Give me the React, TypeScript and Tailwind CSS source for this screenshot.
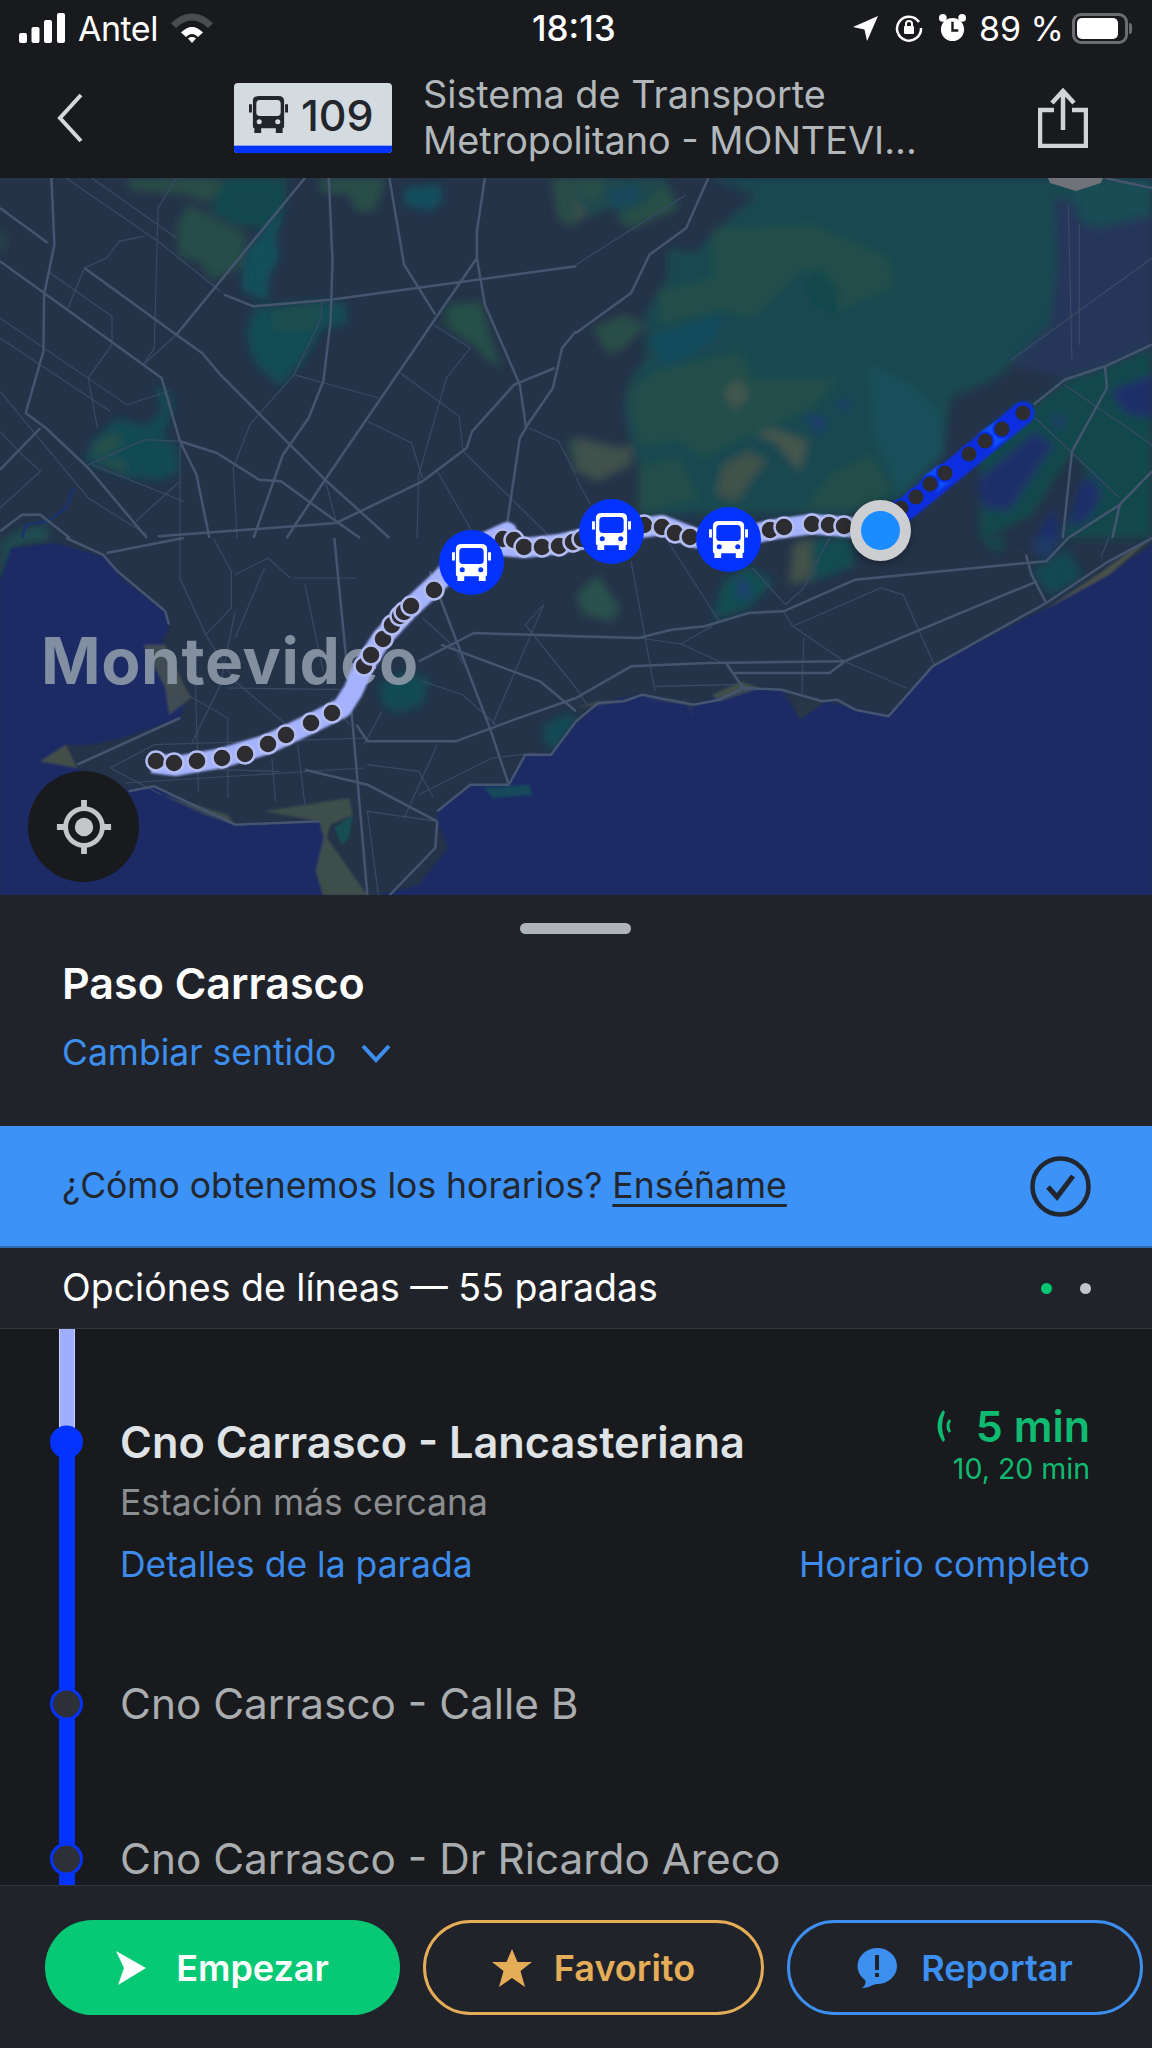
// The map was traced in four crops, each 576x360 px shown at 1568x1080.
const SX = 2.722
const SY = 3

type Quad = 0 | 1 | 2 | 3
const OFFSET: [number, number][] = [[0, 0], [576, 0], [0, 360], [576, 360]]

function conv(quad: Quad, s: string): string {
  const [ox, oy] = OFFSET[quad]
  return s
    .split(' ')
    .map((p) => {
      const [x, y] = p.split(',').map(Number)
      return `${(ox + x / SX).toFixed(1)},${(oy + y / SY).toFixed(1)}`
    })
    .join(' ')
}

const AREAS: [Quad, string, string][] = [
  // top left
  [0, '#2c5447', '350,0 600,0 600,40 560,75 510,50 350,35'],
  [0, '#11504f', '610,0 780,0 780,60 760,150 650,145 570,100'],
  [0, '#275449', '510,80 570,110 670,170 660,260 580,310 540,250 490,240 480,150'],
  [0, '#0f5860', '770,100 750,180 760,240 730,300 730,370 660,340 660,270 680,200'],
  [0, '#0f5258', '690,390 870,370 940,375 945,440 880,450 820,560 760,625 690,550 670,470'],
  [0, '#1d5650', '740,400 870,380 860,450 750,460'],
  [0, '#2a5649', '870,0 1050,0 1020,100 970,100 950,50 870,40'],
  [0, '#0e5763', '1100,30 1200,20 1205,70 1170,100 1100,80'],
  [0, '#1f3f3f', '1200,400 1220,380 1220,440 1190,440'],
  [0, '#285949', '1220,380 1310,370 1340,500 1370,570 1320,540 1300,510 1220,450'],
  [0, '#2c5447', '1500,0 1568,0 1568,150 1520,130'],
  [0, '#0f5158', '420,620 470,650 465,720 440,780 480,800 490,880 430,910 390,900 350,900 230,850 250,790 320,720 400,745 440,700'],
  [0, '#2a5a48', '250,810 320,760 330,800 260,840'],
  [0, '#2c5a48', '260,850 340,850 340,885'],
  [0, '#2b5a48', '0,150 12,170 10,220 0,220'],
  [0, '#1c5a55', '50,1060 130,1040 130,1080 20,1080'],
  [0, '#2a5a4a', '1545,790 1568,780 1568,890'],
  // top right, the big green mass
  [1, '#1a5050', '0,0 240,0 280,90 150,150 100,90 0,130'],
  [1, '#2b5649', '0,0 80,0 60,70 20,60'],
  [1, '#125065', '80,40 170,20 170,70 110,90'],
  [1, '#2c5847', '200,70 240,20 280,90 150,150 110,120'],
  [1, '#445a4c', '0,60 30,110 0,130'],
  [1, '#134f52', '360,0 1340,0 1370,130 1300,60 1310,250 1290,440 1180,570 1130,610 1020,660 1000,830 880,970 760,1010 170,1010 170,870 150,800 130,680 150,600 190,540 190,400 210,370 250,300 250,210 320,225 370,170 490,50'],
  [1, '#28395e', '1300,60 1568,110 1568,500 1430,570 1330,600 1180,560 1290,440 1310,250'],
  [1, '#125359', '1340,0 1568,0 1568,110 1420,150 1370,130'],
  [1, '#24544c', '370,150 650,140 850,240 870,320 720,400 620,270 480,420 400,400 230,440 220,340 370,300'],
  [1, '#24544c', '140,640 230,570 450,520 480,600 720,600 640,690 420,800 350,840 280,790 170,800'],
  [1, '#24544c', '170,860 280,840 340,960 170,1010'],
  [1, '#24544c', '700,880 800,830 860,930 800,1000 620,990'],
  [1, '#0f5163', '200,480 400,400 380,480 300,540 240,570'],
  [1, '#0f4f4e', '620,330 660,260 710,330 720,420 650,380'],
  [1, '#165860', '800,560 910,620 990,700 1000,830 880,950 810,760'],
  [1, '#48604f', '400,640 440,600 475,650 430,700'],
  [1, '#50604f', '490,770 530,750 630,790 610,880 540,790'],
  [1, '#465c4c', '400,860 470,820 520,850 480,900 440,970 380,950'],
  [1, '#1e3c7d', '620,715 680,720 670,770'],
  [1, '#1a3f7a', '715,670 745,665 740,695 720,695'],
  [1, '#2c5749', '45,450 130,410 190,440 130,510 90,530'],
  [1, '#4a5a4e', '0,780 50,790 120,810 150,800 150,860 60,910 0,880'],
  [1, '#114f4d', '1250,680 1330,610 1440,570 1568,510 1568,1080 1100,1080 1100,800 1200,680'],
  [1, '#24334a', '1240,1010 1350,820 1390,880 1320,1080 1110,1080'],
  [1, '#1f2f73', '1450,640 1568,590 1568,720 1500,710'],
  [1, '#1f2f73', '1090,910 1250,760 1300,800 1240,900 1180,1000 1110,990'],
  [1, '#1f2f73', '1370,920 1410,890 1430,960 1390,1030 1340,1050'],
  [1, '#1f2f73', '1260,1060 1300,990 1320,1080 1260,1080'],
  [1, '#1f3f73', '1290,710 1340,720 1310,760'],
  // bottom left
  [2, '#1d4f50', '0,0 170,0 60,20 0,130'],
  [2, '#0f5158', '1030,440 1100,400 1170,420 1150,500 1080,525 1040,500'],
  [2, '#0f5158', '1480,560 1540,530 1568,530 1568,560 1510,640 1480,610'],
  // bottom right
  [3, '#2a5a4f', '0,170 60,110 120,210 100,250 20,230'],
  [3, '#0f5555', '470,85 540,130 470,210 370,245 400,130'],
  [3, '#1f3f80', '440,120 470,130 470,185 445,180'],
  [3, '#0f5355', '580,140 600,10 690,0 750,0 760,85 640,130'],
  [3, '#4d5a4a', '580,140 590,20 640,0 640,120'],
  [3, '#0f4f4f', '1100,0 1170,0 1150,50'],
  [3, '#1a3c70', '1240,0 1320,0 1290,60 1250,50'],
  [3, '#0f5055', '1240,100 1340,30 1380,120 1290,170'],
]

const SEA: [Quad, string][] = [
  [2, '0,130 30,30 150,15 290,60 340,130 450,220 460,270 440,310 480,410 510,470 490,540 330,600 240,620 180,620 110,670 210,690 300,760 420,745 640,860 870,850 885,900 860,1000 880,1080 0,1080'],
  [2, '1000,1080 1140,1040 1220,930 1190,850 1190,820 1280,740 1385,740 1430,650 1500,650 1568,550 1568,1080'],
  [3, '0,560 60,495 180,470 320,505 450,450 560,455 610,545 680,490 750,510 850,535 970,385 1270,215 1450,110 1568,20 1568,1080 0,1080'],
]

// drawn on top of the sea
const SHORE: [Quad, string, string][] = [
  [2, '#4f5a4a', '110,670 180,620 210,690'],
  [2, '#4f5a4a', '390,320 450,320 500,440 520,480 460,530 450,450'],
  [2, '#0f5555', '1320,750 1440,740 1450,770 1340,780'],
  [2, '#4a5a4c', '720,820 950,780 960,830 900,860 890,900 1000,1072 880,1072 860,1000 880,900 870,850'],
  [2, '#0f5a5a', '910,870 960,830 950,900 930,920'],
  [2, '#4a5a4c', '440,770 620,830 640,860 560,830'],
  [3, '#5a5e4a', '1270,220 1420,110 1520,30 1568,0 1450,110'],
  [3, '#4d5a4a', '370,470 450,430 500,450 390,490'],
  [3, '#3f5048', '170,480 300,490 320,540 310,500'],
  [3, '#2a3a48', '590,480 680,490 610,545'],
  [3, '#4d5a4a', '0,510 60,490 130,490'],
]

const WIDE: [Quad, string][] = [
  [0, '140,0 148,200 120,350 118,520 70,705 125,750 240,870 400,1080'],
  [0, '0,250 120,345 440,600 490,790 535,890 570,1080'],
  [0, '230,270 480,470 550,525 600,590 780,790 885,905 1060,1080'],
  [0, '830,0 480,470'],
  [0, '895,0 905,250 900,430 880,610 840,720 770,830 690,1080'],
  [0, '1060,0 1100,260 1185,410'],
  [0, '1320,0 1298,160 1298,240 885,905 780,1080'],
  [0, '1298,240 1320,380 1415,620 1432,750 1415,780 1380,1040'],
  [0, '1568,460 1530,510 1505,630 1430,750'],
  [0, '0,90 130,195'],
  [0, '0,875 110,750'],
  [0, '430,1075 915,1035 1150,910 1270,810 1285,760 1400,620 1510,570'],
  [0, '490,790 590,825 705,905 765,910 915,1030 980,1080'],
  [0, '610,350 690,385 900,365 1568,265'],
  [0, '0,1060 60,1010 110,1010 190,1080'],
  [1, '360,0 300,150 200,230 150,345 0,465'],
  [1, '1568,500 1440,565 1330,605 1245,680'],
  [1, '1440,565 1445,630 1350,820 1325,1080'],
  [1, '1568,880 1480,980 1340,1080'],
  [1, '1480,980 1460,1080'],
  [1, '1440,0 1568,30'],
  [2, '180,0 280,50 320,100 450,220 460,260'],
  [2, '290,45 500,0'],
  [2, '210,680 490,540'],
  [2, '910,0 960,560 1000,1072'],
  [2, '1170,100 1330,560 1385,740'],
  [2, '1140,370 1290,285 1568,295'],
  [2, '970,560 1000,610 1240,610 1400,545 1568,480'],
  [2, '1190,850 1000,740 830,695'],
  [2, '1190,850 1185,930 1060,1072'],
  [2, '350,760 420,745 640,860 870,850'],
  [2, '1190,820 1280,740 1385,740 1430,650 1500,650 1568,550'],
  [2, '1200,320 1470,430 1568,520'],
  [3, '0,295 170,300 260,275 350,265 470,225 565,220 760,125 1225,75'],
  [3, '0,480 150,385 360,375 730,370 1255,130'],
  [3, '1225,75 1280,70 1340,0'],
  [3, '1225,50 1240,110 1280,195'],
  [3, '1280,195 1450,70 1568,0'],
  [3, '430,405 690,405 730,372'],
  [3, '410,378 455,450 560,455 670,490 710,485 760,515 850,535 970,385 1280,195'],
  [3, '0,550 60,495 130,490 180,470 320,500 390,485 455,450'],
]

const THIN: [Quad, string][] = [
  [0, '180,0 430,190 600,340'],
  [0, '250,0 480,180'],
  [0, '480,470 390,560'],
  [0, '480,0 430,90 420,510 390,560'],
  [0, '390,175 325,190 290,240 230,270 185,390'],
  [0, '130,280 305,415 305,500 240,600 265,750'],
  [0, '0,420 345,680 460,640'],
  [0, '0,480 300,700'],
  [0, '240,860 395,785 490,790'],
  [0, '800,590 1030,660'],
  [0, '875,370 875,420 800,590 680,740 635,870 645,1080'],
  [0, '1090,585 1250,715 1260,820 1390,960 1500,1080'],
  [0, '1180,440 1280,510 1215,600 1140,890 1135,1080'],
  [0, '1000,730 1120,795 1150,900'],
  [0, '1190,880 1290,1070'],
  [0, '1440,750 1520,790 1568,890'],
  [0, '490,910 370,1030'],
  [0, '490,800 490,1080'],
  [0, '0,640 240,960 400,1070'],
  [0, '500,970 250,860'],
  [0, '0,760 60,830 110,880 0,990'],
  [0, '915,1030 885,905'],
  [1, '300,50 0,260'],
  [1, '1330,620 1568,800'],
  [1, '1250,720 1480,960'],
  [1, '0,900 40,980'],
  [1, '1180,550 1568,240'],
  [1, '1340,80 1350,550'],
  [1, '1370,140 1370,500'],
  [2, '490,0 490,120 560,290 640,430 780,560'],
  [2, '580,0 630,100 630,210 560,290'],
  [2, '800,120 970,120'],
  [2, '640,110 730,60 790,120'],
  [2, '830,140 880,400'],
  [2, '520,620 600,440 640,220'],
  [2, '720,90 640,300'],
  [2, '510,470 620,540 620,780'],
  [2, '420,620 1000,600'],
  [2, '300,690 420,620'],
  [2, '300,690 440,770'],
  [2, '340,735 990,690'],
  [2, '420,690 760,700'],
  [2, '530,350 540,760'],
  [2, '740,660 750,790'],
  [2, '810,620 830,800'],
  [2, '900,480 950,560'],
  [2, '620,450 950,455'],
  [2, '1150,240 1240,330 1260,380'],
  [2, '1040,520 990,620'],
  [2, '1340,560 1480,200 1430,260 1568,450'],
  [2, '1100,840 1190,620'],
  [2, '1140,770 1340,660 1460,645'],
  [2, '1000,680 1140,700 1180,780'],
  [2, '1030,1072 1000,820 1190,850'],
  [2, '1150,430 1260,470 1350,560'],
  [3, '565,220 590,265 730,370 900,450'],
  [3, '590,265 830,150 890,170 975,380'],
  [3, '620,300 615,465'],
  [3, '150,70 215,460'],
  [3, '215,445 430,440'],
  [3, '175,300 285,318 370,265'],
  [3, '285,318 420,385'],
  [3, '250,10 390,250'],
  [3, '570,200 480,90'],
  [3, '570,200 620,150 690,0'],
  [3, '0,450 30,500'],
  [3, '1450,0 1430,55'],
]

// Route, in real map pixels
const LIGHT_ROUTE = '152,585 176,588 222,580 268,566 312,545 342,530 353,513 364,488 382,460 408,432 440,402 468,372 507,354 503,368 524,370 559,366 612,354 662,347 695,360 728,362 770,352 812,346 880,352'
const DARK_ROUTE = '880,352 1023,235'
const LIGHT_DOTS = [
  [156, 583], [174, 585], [197, 583], [222, 580], [245, 576], [268, 566], [286, 557], [311, 545], [332, 535],
  [364, 488], [371, 477], [383, 461], [392, 447], [400, 438], [404, 434], [411, 428], [434, 412],
  [503, 361], [514, 362], [524, 369], [542, 369], [559, 368], [573, 364], [582, 361],
  [644, 347], [662, 349], [675, 355], [690, 359],
  [770, 352], [784, 349], [812, 346], [829, 347], [844, 348],
]
const DARK_DOTS = [
  [901, 330], [916, 319], [930, 306], [945, 295], [969, 276], [985, 263], [1002, 251], [1023, 235],
]

function BusGlyph({ className, color = '#fff', glass = '#0433ff' }: { className?: string; color?: string; glass?: string }) {
  return (
    <svg viewBox="0 0 40 40" className={className}>
      <path fill={color} d="M4 6Q4 1 10 1H30Q36 1 36 6V32Q36 34 34.500 34V39H27.500V34H12.500V39H5.500V34Q4 34 4 32Z" />
      <path fill={color} d="M0 9.500H3V18H0ZM37 9.500H40V18H37Z" />
      <path fill={glass} d="M7.500 9Q7.500 5 11 5H29Q32.500 5 32.500 9V18Q32.500 21.500 29 21.500H11Q7.500 21.500 7.500 18Z" />
      <circle cx="10.500" cy="27.500" r="2.600" fill={glass} />
      <circle cx="29.500" cy="27.500" r="2.600" fill={glass} />
    </svg>
  )
}

function BusMarker({ className }: { className: string }) {
  return (
    <div className={`absolute w-[65px] h-[65px] rounded-full bg-[#0433ff] flex items-center justify-center ${className}`}>
      <BusGlyph className="w-[39px] h-[39px]" />
    </div>
  )
}

function MapView() {
  return (
    <div className="relative h-[717px] overflow-hidden bg-[#253349]">
      <svg viewBox="0 0 1152 717" className="absolute inset-0 w-full h-full">
        <defs>
          <filter id="soft" x="-5%" y="-5%" width="110%" height="110%">
            <feGaussianBlur stdDeviation="4" />
          </filter>
          <filter id="edge" x="-5%" y="-5%" width="110%" height="110%">
            <feGaussianBlur stdDeviation="1" />
          </filter>
        </defs>
        <g filter="url(#soft)" opacity="0.78">
          {AREAS.map(([q, fill, s], i) => <polygon key={i} fill={fill} points={conv(q, s)} />)}
        </g>
        <polyline points={conv(0, '200,930 180,990 130,1030 70,1040 60,1080')} fill="none" stroke="#1a3270" strokeWidth="2.500" />
        <g filter="url(#edge)">
          {SEA.map(([q, s], i) => <polygon key={i} fill="#1a2a66" points={conv(q, s)} />)}
          <g opacity="0.7">
            {SHORE.map(([q, fill, s], i) => <polygon key={i} fill={fill} points={conv(q, s)} />)}
          </g>
        </g>
        {THIN.map(([q, s], i) => (
          <polyline key={i} points={conv(q, s)} fill="none" stroke="#3a4a66" strokeWidth="1.200" />
        ))}
        {WIDE.map(([q, s], i) => (
          <polyline key={i} points={conv(q, s)} fill="none" stroke="#45556f" strokeWidth="2.500" strokeLinejoin="round" />
        ))}
        <polygon fill="#6f7278" points="1048,0 1103,0 1101,5 1076,13 1050,5" />
      </svg>

      <span className="absolute left-[41px] top-[448px] text-[64px] leading-[70px] font-bold tracking-[0.6px] text-[#8e99a9]/90">Montevideo</span>

      <svg viewBox="0 0 1152 717" className="absolute inset-0 w-full h-full">
        <g filter="url(#edge)">
          <polyline points={LIGHT_ROUTE} fill="none" stroke="#a5b3ff" strokeWidth="20" strokeLinejoin="round" />
          <polyline points={DARK_ROUTE} fill="none" stroke="#0a2fe0" strokeWidth="23" strokeLinecap="round" />
          <polyline points="930,306 945,295" fill="none" stroke="#1050ff" strokeWidth="20" />
          <polyline points="985,263 1002,251" fill="none" stroke="#1050ff" strokeWidth="20" />
        </g>
        {LIGHT_DOTS.map(([x, y], i) => (
          <circle key={i} cx={x} cy={y} r="9.500" fill="#2d2c30" stroke="#b4bdf2" strokeWidth="2.500" />
        ))}
        {DARK_DOTS.map(([x, y], i) => (
          <circle key={i} cx={x} cy={y} r="8.500" fill="#2d2c30" stroke="#0a2fe0" strokeWidth="2" />
        ))}
      </svg>

      <BusMarker className="left-[439px] top-[352px]" />
      <BusMarker className="left-[579px] top-[321px]" />
      <BusMarker className="left-[696px] top-[329px]" />

      <div className="absolute left-[850px] top-[322px] w-[61px] h-[61px] rounded-full bg-[#cdced1] flex items-center justify-center shadow-[0_2px_8px_rgba(0,0,0,0.35)]">
        <div className="w-[39px] h-[39px] rounded-full bg-[#1a8cff]" />
      </div>

      <div className="absolute left-[28px] top-[593px] w-[111px] h-[111px] rounded-full bg-[#191a1d] flex items-center justify-center">
        <svg viewBox="0 0 60 60" className="w-[58px] h-[58px]" fill="none" stroke="#c4c7c9">
          <circle cx="30" cy="30" r="19" strokeWidth="5" />
          <circle cx="30" cy="30" r="9.500" fill="#c4c7c9" stroke="none" />
          <path strokeWidth="6" d="M30 2V11M30 49V58M2 30H11M49 30H58" />
        </svg>
      </div>
    </div>
  )
}

function StatusBar() {
  return (
    <div className="h-[60px] pb-[4px] relative flex items-center justify-between pl-[19px] pr-[20px] text-white text-[34px]">
      <div className="flex items-center">
        <svg viewBox="0 0 46 30" className="w-[46px] h-[30px]" fill="#fff">
          <rect x="0" y="20" width="8" height="10" rx="2" />
          <rect x="12.500" y="14" width="8" height="16" rx="2" />
          <rect x="25" y="7" width="8" height="23" rx="2" />
          <rect x="38" y="0" width="8" height="30" rx="2" />
        </svg>
        <span className="ml-[13px] tracking-[-0.5px]">Antel</span>
        <svg viewBox="0 0 42 30" className="ml-[13px] w-[42px] h-[30px]">
          <path fill="#4a4c50" d="M0 10.500C12-3 30-3 42 10.500L37 15C27 5 15 5 5 15Z" />
          <path fill="#fff" d="M10 19.500C17 12 25 12 32 19.500L27 24C23 20 19 20 15 24ZM17 25.500C19 23.500 23 23.500 25 25.500L21 30Z" />
        </svg>
      </div>
      <span className="absolute left-[532px] text-[35px] font-medium">18:13</span>
      <div className="flex items-center">
        <svg viewBox="0 0 24 24" className="w-[25px] h-[25px]" fill="#fff"><path d="M24 0L13.500 24L11 13L0 10.500Z" /></svg>
        <svg viewBox="0 0 28 28" className="ml-[17px] w-[28px] h-[28px]" fill="none" stroke="#fff" strokeWidth="2.500">
          <path d="M24 8A12 12 0 1 0 26 14" />
          <rect x="9" y="12" width="10" height="8" rx="1" fill="#fff" stroke="none" />
          <path strokeWidth="2" d="M11 12V10A3 3 0 0 1 17 10V12" />
        </svg>
        <svg viewBox="0 0 28 30" className="ml-[16px] w-[27px] h-[29px]" fill="#fff">
          <circle cx="14" cy="16" r="12" />
          <circle cx="4" cy="4" r="4" />
          <circle cx="24" cy="4" r="4" />
          <path d="M14 8V17H20" fill="none" stroke="#191a1d" strokeWidth="2.500" />
        </svg>
        <span className="ml-[13px] mr-[8px] whitespace-nowrap">89 %</span>
        <div className="w-[56px] h-[31px] rounded-[9px] border-[3px] border-[#6b6d70] p-[2px]">
          <div className="h-full w-[90%] rounded-[5px] bg-white" />
        </div>
        <div className="w-[3px] h-[11px] ml-[1px] rounded-r bg-[#6b6d70]" />
      </div>
    </div>
  )
}

function Header() {
  return (
    <div className="h-[118px] flex items-center pl-[56px] pr-[64px]">
      <svg viewBox="0 0 28 50" className="w-[28px] h-[50px] -mt-[3px] shrink-0" fill="none" stroke="#d5d8da" strokeWidth="4">
        <path d="M25 2L4 25L25 48" />
      </svg>
      <div className="ml-[150px] -mt-[3px] w-[158px] h-[70px] rounded-[4px] overflow-hidden bg-[#d4dbe0] flex flex-col shrink-0">
        <div className="flex-1 flex items-center pl-[15px] pt-[2px]">
          <BusGlyph className="w-[39px] h-[39px]" color="#22262c" glass="#d4dbe0" />
          <span className="ml-[13px] text-[43px] leading-[50px] font-medium text-[#22262c]">109</span>
        </div>
        <div className="h-[8px] bg-[#0433ff] border-t border-[#8da0e8]" />
      </div>
      <div className="ml-[31px] -mt-[4px] text-[37.800px] leading-[46px] text-[#b1b7bb] whitespace-nowrap">
        <div>Sistema de Transporte</div>
        <div>Metropolitano - MONTEVI...</div>
      </div>
      <svg viewBox="0 0 50 60" className="ml-auto w-[50px] h-[60px] -mt-[2px] shrink-0" fill="none" stroke="#d0d4d6" strokeWidth="4.500">
        <path d="M16 22H2V58H48V22H34" />
        <path d="M25 42V3M14 15L25 3L36 15" />
      </svg>
    </div>
  )
}

function Sheet() {
  return (
    <div className="bg-[#21232a]">
      <div className="h-[231px] pl-[62px] pr-[63px] pt-[28px]">
        <div className="mx-auto w-[111px] h-[11px] rounded-full bg-[#aeb4b8]" />
        <div className="mt-[24px] text-[43px] leading-[50px] font-semibold text-white">Paso Carrasco</div>
        <div className="mt-[20px] flex items-center text-[#3d8fef]">
          <span className="text-[35.500px] leading-[50px]">Cambiar sentido</span>
          <svg viewBox="0 0 30 20" className="ml-[25px] w-[30px] h-[20px]" fill="none" stroke="#3d8fef" strokeWidth="4">
            <path d="M2 3L15 17L28 3" />
          </svg>
        </div>
      </div>
      <div className="h-[122px] bg-[#3c92f6] border-b-2 border-[#2f6cb3] pl-[62px] pr-[61px] flex items-center justify-between text-[#22262f] text-[35.500px]">
        <span>¿Cómo obtenemos los horarios? <span className="underline underline-offset-[6px]">Enséñame</span></span>
        <svg viewBox="0 0 61 61" className="w-[61px] h-[61px]" fill="none" stroke="#22262f">
          <circle cx="30.500" cy="30.500" r="28" strokeWidth="4.500" />
          <path d="M18 31L27 41L43 20" strokeWidth="5" />
        </svg>
      </div>
      <div className="h-[81px] border-b border-[#33353b] pl-[62px] pr-[61px] flex items-center justify-between">
        <span className="text-[37.500px] text-white whitespace-nowrap">Opciónes de líneas — 55 paradas</span>
        <div className="flex items-center gap-[28px]">
          <div className="w-[11px] h-[11px] rounded-full bg-[#06c66f]" />
          <div className="w-[11px] h-[11px] rounded-full bg-[#c3c7c9]" />
        </div>
      </div>
    </div>
  )
}

function StopNode({ active }: { active?: boolean }) {
  return (
    <div className={`absolute left-[-9px] top-1/2 -translate-y-1/2 w-[33px] h-[33px] rounded-full border-[3px] border-[#0433ff] ${active ? 'bg-[#0433ff]' : 'bg-[#2d3038]'}`} />
  )
}

function StopList() {
  return (
    <div className="h-[556px] bg-[#191a1d] overflow-hidden">
      <div className="h-[297px] flex pl-[59px] pr-[62px]">
        <div className="w-[16px] shrink-0 flex flex-col">
          <div className="h-[113px] relative bg-[#a0aeff] border-x border-[#c9d1ff]" />
          <div className="h-[0px] relative"><StopNode active /></div>
          <div className="flex-1 bg-[#0433ff]" />
        </div>
        <div className="ml-[45px] flex-1 pt-[90px]">
          <div className="flex justify-between h-[46px]">
            <span className="text-[43.300px] leading-[46px] font-semibold text-[#dfe3e6] whitespace-nowrap">Cno Carrasco - Lancasteriana</span>
            <div className="flex items-center h-[46px] -mt-[16px] text-[#0fbb70]">
              <svg viewBox="0 0 16 32" className="w-[16px] h-[32px]" fill="#0fbb70">
                <path d="M8 0Q-3 16 8 32L10 30Q4 16 10 2Z" />
                <path d="M14 9Q9 16 14 23L16 21Q13 16 16 11Z" />
              </svg>
              <span className="ml-[25px] text-[43px] font-semibold whitespace-nowrap">5 min</span>
            </div>
          </div>
          <div className="flex justify-between">
            <span className="mt-[15px] text-[35.500px] leading-[46px] text-[#8b8e90]">Estación más cercana</span>
            <span className="-mt-[11px] text-[28.500px] leading-[30px] text-[#0fbb70] whitespace-nowrap">10, 20 min</span>
          </div>
          <div className="mt-[16px] flex justify-between text-[35.500px] leading-[46px] text-[#3d8bea] whitespace-nowrap">
            <span>Detalles de la parada</span>
            <span>Horario completo</span>
          </div>
        </div>
      </div>
      <StopRow name="Cno Carrasco - Calle B" />
      <StopRow name="Cno Carrasco - Dr Ricardo Areco" />
    </div>
  )
}

function StopRow({ name }: { name: string }) {
  return (
    <div className="h-[155px] flex items-center pl-[59px]">
      <div className="w-[16px] h-full relative bg-[#0433ff] shrink-0"><StopNode /></div>
      <span className="ml-[45px] text-[42.300px] text-[#a9adb0] whitespace-nowrap">{name}</span>
    </div>
  )
}

function ActionBar() {
  return (
    <div className="h-[163px] bg-[#21232a] border-t border-[#33353b] flex items-start pt-[34px] pl-[45px] gap-[23px] text-[36px] font-semibold">
      <button className="w-[355px] h-[95px] rounded-full bg-[#06c875] text-white flex items-center justify-center">
        <svg viewBox="0 0 30 34" className="w-[30px] h-[34px]" fill="#fff"><path d="M0 0L30 17L2 34L8 17Z" /></svg>
        <span className="ml-[30px]">Empezar</span>
      </button>
      <button className="w-[341px] h-[95px] rounded-full border-[3px] border-[#e5ad57] text-[#e5ad57] flex items-center justify-center">
        <svg viewBox="0 0 40 38" className="w-[40px] h-[38px]" fill="#e5ad57"><path d="M20 0L25.500 13H40L28.500 22L33 38L20 29L7 38L11.500 22L0 13H14.500Z" /></svg>
        <span className="ml-[22px]">Favorito</span>
      </button>
      <button className="w-[356px] h-[95px] rounded-full border-[3px] border-[#3d8fef] text-[#3d8fef] flex items-center justify-center">
        <svg viewBox="0 0 40 40" className="w-[40px] h-[40px]">
          <path fill="#3d8fef" d="M20 0A20 18 0 0 1 20 36C16 36 12 40 5 40C9 37 9 34 8 32A20 18 0 0 1 20 0Z" />
          <path fill="#21232a" d="M18 7H22V22H18ZM18 25H22V29H18Z" />
        </svg>
        <span className="ml-[24px]">Reportar</span>
      </button>
    </div>
  )
}

export default function App() {
  return (
    <div className="w-[1152px] h-[2048px] overflow-hidden flex flex-col bg-[#191a1d] font-[Inter,sans-serif]">
      <StatusBar />
      <Header />
      <MapView />
      <Sheet />
      <StopList />
      <ActionBar />
    </div>
  )
}
